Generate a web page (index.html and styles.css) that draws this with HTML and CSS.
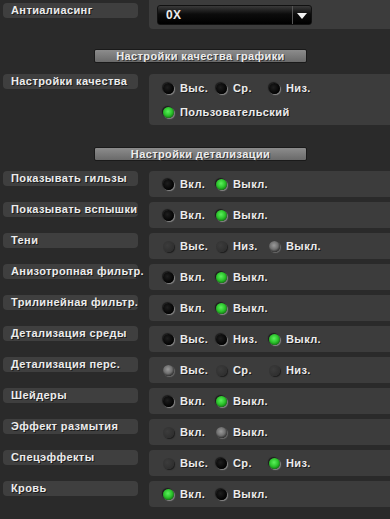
FILE: index.html
```html
<!DOCTYPE html>
<html lang="ru">
<head>
    <meta charset="UTF-8">
    <title>Настройки графики</title>
    <link rel="stylesheet" href="styles.css">
</head>
<body>
    <div class="settings">
        <div class="row row-top">
            <div class="label">Антиалиасинг</div>
            <div class="panel panel-select">
                <div class="select">
                    <span class="select-value">0X</span>
                    <span class="select-arrow"></span>
                </div>
            </div>
        </div>

        <div class="section-head">Настройки качества графики</div>

        <div class="row row-quality">
            <div class="label">Настройки качества</div>
            <div class="panel panel-tall">
                <div class="options">
                    <span class="opt"><i class="radio"></i>Выс.</span>
                    <span class="opt"><i class="radio"></i>Ср.</span>
                    <span class="opt"><i class="radio"></i>Низ.</span>
                </div>
                <div class="options">
                    <span class="opt opt-wide"><i class="radio on"></i>Пользовательский</span>
                </div>
            </div>
        </div>

        <div class="section-head section-detail">Настройки детализации</div>

        <div class="row">
            <div class="label">Показывать гильзы</div>
            <div class="panel options">
                <span class="opt"><i class="radio"></i>Вкл.</span>
                <span class="opt"><i class="radio on"></i>Выкл.</span>
            </div>
        </div>
        <div class="row">
            <div class="label">Показывать вспышки</div>
            <div class="panel options">
                <span class="opt"><i class="radio"></i>Вкл.</span>
                <span class="opt"><i class="radio on"></i>Выкл.</span>
            </div>
        </div>
        <div class="row">
            <div class="label">Тени</div>
            <div class="panel options">
                <span class="opt"><i class="radio dim"></i>Выс.</span>
                <span class="opt"><i class="radio dim"></i>Низ.</span>
                <span class="opt"><i class="radio dim-on"></i>Выкл.</span>
            </div>
        </div>
        <div class="row">
            <div class="label">Анизотропная фильтр.</div>
            <div class="panel options">
                <span class="opt"><i class="radio"></i>Вкл.</span>
                <span class="opt"><i class="radio on"></i>Выкл.</span>
            </div>
        </div>
        <div class="row">
            <div class="label">Трилинейная фильтр.</div>
            <div class="panel options">
                <span class="opt"><i class="radio"></i>Вкл.</span>
                <span class="opt"><i class="radio on"></i>Выкл.</span>
            </div>
        </div>
        <div class="row">
            <div class="label">Детализация среды</div>
            <div class="panel options">
                <span class="opt"><i class="radio"></i>Выс.</span>
                <span class="opt"><i class="radio"></i>Низ.</span>
                <span class="opt"><i class="radio on"></i>Выкл.</span>
            </div>
        </div>
        <div class="row">
            <div class="label">Детализация перс.</div>
            <div class="panel options">
                <span class="opt"><i class="radio dim-on"></i>Выс.</span>
                <span class="opt"><i class="radio dim"></i>Ср.</span>
                <span class="opt"><i class="radio dim"></i>Низ.</span>
            </div>
        </div>
        <div class="row">
            <div class="label">Шейдеры</div>
            <div class="panel options">
                <span class="opt"><i class="radio"></i>Вкл.</span>
                <span class="opt"><i class="radio on"></i>Выкл.</span>
            </div>
        </div>
        <div class="row">
            <div class="label">Эффект размытия</div>
            <div class="panel options">
                <span class="opt"><i class="radio dim"></i>Вкл.</span>
                <span class="opt"><i class="radio dim-on"></i>Выкл.</span>
            </div>
        </div>
        <div class="row">
            <div class="label">Спецэффекты</div>
            <div class="panel options">
                <span class="opt"><i class="radio dim"></i>Выс.</span>
                <span class="opt"><i class="radio"></i>Ср.</span>
                <span class="opt"><i class="radio on"></i>Низ.</span>
            </div>
        </div>
        <div class="row">
            <div class="label">Кровь</div>
            <div class="panel options">
                <span class="opt"><i class="radio on"></i>Вкл.</span>
                <span class="opt"><i class="radio"></i>Выкл.</span>
            </div>
        </div>
    </div>
</body>
</html>
```

FILE: styles.css
```css
body {
    margin: 0;
    background: #2a2a2a;
    font-family: 'Liberation Sans', Arial, sans-serif;
    font-size: 11px;
    font-weight: bold;
    letter-spacing: 0.4px;
    color: #ececec;
}

.settings {
    display: flex;
    flex-direction: column;
    padding-bottom: 10px;
}

.row {
    display: flex;
    align-items: flex-start;
    gap: 11px;
    padding-left: 3px;
    margin-bottom: 5px;
}

.label {
    flex: 0 0 135px;
    min-width: 0;
    height: 15px;
    line-height: 15px;
    padding-left: 8px;
    box-sizing: border-box;
    background: #3f3f3f;
    border-radius: 4px;
    white-space: nowrap;
    text-shadow: 1px 1px 0 #1c1c1c;
}

.panel {
    flex: 1;
    height: 26px;
    background: #3c3c3c;
    border-radius: 4px 0 0 4px;
    box-sizing: border-box;
}

/* antialiasing dropdown */
.row-top {
    margin-bottom: 20px;
}

.row-top .label {
    margin-top: 3px;
}

.panel-select {
    height: 29px;
    padding: 5px 0 0 8px;
    border-radius: 0 0 0 4px;
}

.select {
    display: flex;
    width: 155px;
    height: 20px;
    border: 1px solid #111;
    border-radius: 3px;
    box-sizing: border-box;
    background: linear-gradient(#3a3a3a, #0c0c0c 45%, #000);
}

.select-value {
    flex: 1;
    padding-left: 8px;
    line-height: 18px;
    font-size: 12px;
}

.select-arrow {
    width: 18px;
    border-left: 1px solid #555;
    position: relative;
}

.select-arrow::after {
    content: "";
    position: absolute;
    left: 4px;
    top: 7px;
    border-left: 5px solid transparent;
    border-right: 5px solid transparent;
    border-top: 6px solid #f2f2f2;
}

/* section headers */
.section-head {
    align-self: flex-start;
    margin: 0 0 11px 94px;
    width: 213px;
    height: 14px;
    line-height: 13px;
    box-sizing: border-box;
    text-align: center;
    border: 1px solid #1a1a1a;
    border-radius: 2px;
    background: linear-gradient(#8c8c8c, #6a6a6a);
    text-shadow: 1px 1px 0 #333;
}

.section-detail {
    margin-bottom: 10px;
}

.row-quality {
    margin-bottom: 22px;
}

/* radio options */
.options {
    display: flex;
    align-items: center;
    padding-left: 14px;
}

.panel-tall {
    height: 51px;
    padding-top: 2px;
}

.panel-tall .options {
    height: 24px;
}

.opt {
    display: flex;
    align-items: center;
    gap: 6px;
    width: 53px;
    white-space: nowrap;
    text-shadow: 1px 1px 0 #1c1c1c;
}

.opt-wide {
    width: auto;
}

.radio {
    flex: 0 0 11px;
    height: 11px;
    border-radius: 50%;
    background: radial-gradient(circle at 40% 40%, #1e1e1e, #020202 70%);
    box-shadow: 1px 1px 1px #8a8a8a, -1px -1px 1px #1a1a1a;
}

.radio.on {
    background: radial-gradient(circle at 45% 40%, #5cf05c, #2cc42c 45%, #157a15 75%, #0a0a0a 85%);
}

.radio.dim {
    background: radial-gradient(circle at 40% 40%, #3c3c3c, #2e2e2e 80%);
    box-shadow: 1px 1px 1px #1c1c1c;
}

.radio.dim-on {
    background: radial-gradient(circle at 45% 40%, #9a9a9a, #707070 45%, #3a3a3a 70%, #0c0c0c 85%);
    box-shadow: 1px 1px 1px #6a6a6a;
}
```
